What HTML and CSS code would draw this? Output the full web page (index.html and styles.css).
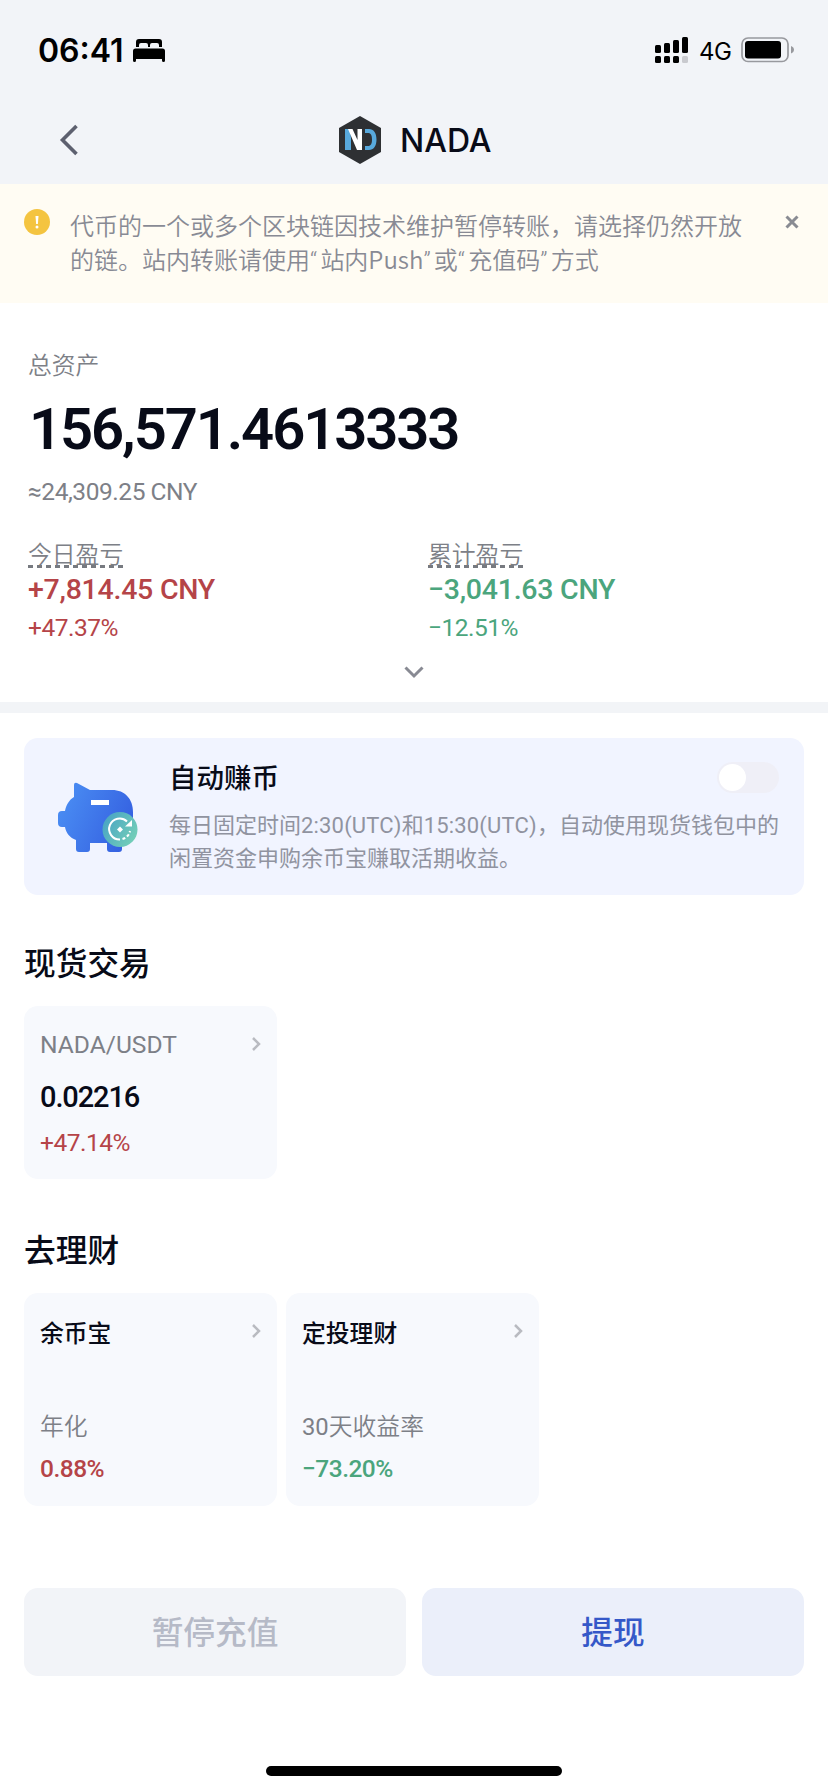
FILE: index.html
```html
<!DOCTYPE html>
<html lang="zh-CN">
<head>
    <meta charset="UTF-8">
    <meta name="viewport" content="width=device-width, initial-scale=1.0">
    <title>NADA</title>
    <link rel="stylesheet" href="styles.css">
</head>
<body>
    <header>
        <div class="status-bar">
            <span class="time">06:41</span>
            <svg class="bed" width="32" height="23" viewBox="0 0 32 23">
                <path d="M3 8V3a3 3 0 0 1 3-3h20a3 3 0 0 1 3 3v5h-3V6a2 2 0 0 0-2-2h-5a2 2 0 0 0-2 2v2h-2V6a2 2 0 0 0-2-2H8a2 2 0 0 0-2 2v2z"/>
                <path d="M0 12a2.500 2.500 0 0 1 2.500-2.500h27A2.500 2.500 0 0 1 32 12v9.500a1.500 1.500 0 0 1-3 0V20H3v1.500a1.500 1.500 0 0 1-3 0z"/>
            </svg>
            <svg class="signal" width="34" height="27" viewBox="0 0 34 27">
                <rect x="0" y="8" width="6" height="8" rx="1.500"/>
                <rect x="9" y="6" width="6" height="10" rx="1.500"/>
                <rect x="18" y="3" width="6" height="13" rx="1.500"/>
                <rect x="27" y="0" width="6" height="16" rx="1.500"/>
                <rect x="0" y="19" width="6" height="7" rx="1.500"/>
                <rect x="9" y="19" width="6" height="7" rx="1.500"/>
                <rect x="18" y="19" width="6" height="7" rx="1.500"/>
                <rect x="27" y="19" width="6" height="7" rx="1.500" fill="#c9cacf"/>
            </svg>
            <span class="network">4G</span>
            <svg class="battery" width="54" height="26" viewBox="0 0 54 26">
                <rect x="1" y="1" width="46" height="23.500" rx="6" fill="none" stroke="#98999e" stroke-width="1.700"/>
                <rect x="4" y="4" width="36" height="17.500" rx="3"/>
                <path d="M50 9c4 1.500 4 6 0 7.500z" fill="#98999e"/>
            </svg>
        </div>
        <nav>
            <svg class="back" width="19" height="32" viewBox="0 0 19 32">
                <path d="M17.500 2L3.500 16l14 14" fill="none" stroke="#5d606f" stroke-width="3.600"/>
            </svg>
            <div class="coin">
                <svg width="42" height="48" viewBox="0 0 42 48">
                    <path d="M21 0l21 12v24L21 48 0 36V12z" fill="#2e3033"/>
                    <path d="M6 13h5l1 9v12H6z" fill="#58a9dc"/>
                    <path d="M9 13h4.500l5 11V13h4.500v21h-5L12 20z" fill="#fff"/>
                    <path d="M26 13h4c4.500 0 7.500 4 7.500 10.500S34.500 34 30 34h-4v-4h3c3 0 4-2.500 4-6.500S32 17 29 17h-3z" fill="#58a9dc"/>
                </svg>
                <h1>NADA</h1>
            </div>
        </nav>
    </header>

    <div class="notice">
        <svg class="warn" width="26" height="26" viewBox="0 0 26 26">
            <circle cx="13" cy="13" r="13" fill="#f4c440"/>
            <path d="M11.500 7h3l-.6 8h-1.800z" fill="#fff"/>
            <circle cx="13" cy="18" r="1.500" fill="#fff"/>
        </svg>
        <p>代币的一个或多个区块链因技术维护暂停转账，请选择仍然开放<br>的链。站内转账请使用<span class="quote">“</span>站内Push<span class="quote">”</span>或<span class="quote">“</span>充值码<span class="quote">”</span>方式</p>
        <svg class="close" width="14" height="14" viewBox="0 0 14 14">
            <path d="M1.500 1.500l11 11M12.500 1.500l-11 11" stroke="#898b92" stroke-width="3"/>
        </svg>
    </div>

    <section class="assets">
        <div class="label">总资产</div>
        <div class="total">156,571.4613333</div>
        <div class="approx">≈24,309.25 CNY</div>
        <div class="pnl">
            <div class="pnl-item up">
                <span class="pnl-label">今日盈亏</span>
                <div class="pnl-value">+7,814.45 CNY</div>
                <div class="pnl-rate">+47.37%</div>
            </div>
            <div class="pnl-item down">
                <span class="pnl-label">累计盈亏</span>
                <div class="pnl-value">−3,041.63 CNY</div>
                <div class="pnl-rate">−12.51%</div>
            </div>
        </div>
        <svg class="expand" width="20" height="13" viewBox="0 0 20 13">
            <path d="M1.500 1.500L10 10l8.500-8.500" fill="none" stroke="#888a93" stroke-width="3"/>
        </svg>
    </section>

    <main>
        <div class="earn">
            <svg class="pig" width="82" height="72" viewBox="0 0 82 72">
                <defs>
                    <linearGradient id="pigFill" x1="0" y1="0.300" x2="1" y2="0.700">
                        <stop offset="0" stop-color="#4a8df3"/>
                        <stop offset="1" stop-color="#345fe0"/>
                    </linearGradient>
                    <linearGradient id="badgeFill" x1="0" y1="0" x2="1" y2="0.600">
                        <stop offset="0" stop-color="#449fc6"/>
                        <stop offset="1" stop-color="#72cdb8"/>
                    </linearGradient>
                </defs>
                <path d="M16 3q0-3 3-2l13 7h22c13 0 21 9 21 22v10c0 9-5 15-11 18v9q0 3-3 3H52q-3 0-3-3v-6H32v6q0 3-3 3H21q-3 0-3-3v-9C12 56 8 51 7 45H4q-4 0-4-4v-8q0-4 4-4h3c1-6 4-11 9-14z" fill="url(#pigFill)"/>
                <rect x="33" y="18" width="18" height="5" fill="#fff"/>
                <circle cx="62" cy="47.500" r="17.500" fill="url(#badgeFill)"/>
                <path d="M69 39.500A10.500 10.500 0 1 0 62 57.500" fill="none" stroke="#fff" stroke-width="2"/>
                <path d="M64.500 57a10.500 10.500 0 0 0 7.500-8" fill="none" stroke="#fff" stroke-width="2" stroke-dasharray="3 2"/>
                <path d="M74 38v6.500h-7z" fill="#fff"/>
                <path d="M62 44.500l3 3-3 3-3-3z" fill="#fff"/>
            </svg>
            <div class="earn-body">
                <div class="earn-head">
                    <h3>自动赚币</h3>
                    <div class="toggle"><i></i></div>
                </div>
                <p>每日固定时间<span class="utc">2:30(UTC)</span>和<span class="utc">15:30(UTC)</span>，自动使用现货钱包中的<br>闲置资金申购余币宝赚取活期收益。</p>
            </div>
        </div>

        <h2>现货交易</h2>
        <div class="cards">
            <div class="card spot up">
                <div class="card-head">
                    <span class="pair">NADA/USDT</span>
                    <svg width="9" height="14" viewBox="0 0 9 14"><path d="M1 1l6 6-6 6" fill="none" stroke="#b9bbc1" stroke-width="2.500"/></svg>
                </div>
                <div class="price">0.02216</div>
                <div class="rate">+47.14%</div>
            </div>
        </div>

        <h2 class="finance-title">去理财</h2>
        <div class="cards">
            <div class="card finance up">
                <div class="card-head">
                    <span>余币宝</span>
                    <svg width="9" height="14" viewBox="0 0 9 14"><path d="M1 1l6 6-6 6" fill="none" stroke="#b9bbc1" stroke-width="2.500"/></svg>
                </div>
                <div class="sub">年化</div>
                <div class="rate">0.88%</div>
            </div>
            <div class="card finance down">
                <div class="card-head">
                    <span>定投理财</span>
                    <svg width="9" height="14" viewBox="0 0 9 14"><path d="M1 1l6 6-6 6" fill="none" stroke="#b9bbc1" stroke-width="2.500"/></svg>
                </div>
                <div class="sub"><span class="num">30</span>天收益率</div>
                <div class="rate">−73.20%</div>
            </div>
        </div>
    </main>

    <footer>
        <button class="deposit" disabled>暂停充值</button>
        <button class="withdraw">提现</button>
    </footer>
    <div class="home-bar"></div>
</body>
</html>
```
FILE: styles.css
```css
*{
    margin: 0;
    padding: 0;
    box-sizing: border-box;
}
body {
    width: 828px;
    height: 1792px;
    background-color: #fff;
    color: #080b18;
    font-family: Roboto, "Noto Sans CJK SC", sans-serif;
    overflow: hidden;
}
svg {
    display: block;
    flex-shrink: 0;
}

/* header */
header {
    height: 184px;
    background-color: #f2f4f8;
}
.status-bar {
    height: 100px;
    padding: 0 33px 0 38px;
    display: flex;
    align-items: center;
    color: #000;
    font-family: Inter, sans-serif;
}
.time {
    font-size: 32px;
    font-weight: 600;
    width: 95px;
}
.signal {
    margin-left: auto;
}
.network {
    width: 32px;
    margin: 2px 10px 0 10px;
    font-size: 24px;
    letter-spacing: -0.5px;
}
nav {
    height: 80px;
    padding-left: 59px;
    display: flex;
    align-items: center;
}
.coin {
    display: flex;
    align-items: center;
    gap: 19px;
    margin-left: 261px;
}
h1 {
    font-family: Inter, sans-serif;
    font-size: 32px;
    font-weight: 500;
}

/* notice */
.notice {
    height: 119px;
    padding: 24px 29px 0 24px;
    display: flex;
    align-items: flex-start;
    background-color: #fffcf3;
    color: #888a94;
}
.warn {
    margin-top: 1px;
}
.notice p {
    margin-left: 20px;
    font-family: "Noto Sans CJK SC", sans-serif;
    font-size: 24px;
    font-weight: 350;
    line-height: 34px;
    white-space: nowrap;
}
.quote {
    font-family: Roboto, sans-serif;
    letter-spacing: 3.200px;
}
.close {
    margin: 7px 0 0 auto;
}

/* assets */
.assets {
    height: 399px;
    padding: 46px 28px 0;
    color: #7d8087;
}
.label {
    font-size: 23.800px;
    font-weight: 350;
    line-height: 34px;
}
.total {
    margin-top: 11px;
    padding-left: 1px;
    color: #080b18;
    font-size: 58px;
    font-weight: 600;
    line-height: 70px;
    letter-spacing: -2.100px;
}
.approx {
    margin-top: 12px;
    font-size: 24.500px;
    line-height: 32px;
    letter-spacing: -0.450px;
}
.pnl {
    margin-top: 30px;
    display: grid;
    grid-template-columns: 400px 1fr;
}
.pnl-label {
    display: inline-block;
    height: 30px;
    color: #7d8087;
    font-size: 23.800px;
    font-weight: 350;
    line-height: 34px;
    background: repeating-linear-gradient(90deg, #777a80 0 5px, transparent 5px 9px) bottom / 100% 3px no-repeat;
}
.pnl-value {
    font-size: 28.500px;
    font-weight: 500;
    line-height: 36px;
    margin-top: 4px;
    letter-spacing: -0.250px;
}
.pnl-rate {
    font-size: 24.500px;
    line-height: 32px;
    margin-top: 4px;
    letter-spacing: -0.500px;
}
.up .pnl-value, .up .pnl-rate, .up .rate {
    color: #b54448;
}
.down .pnl-value, .down .pnl-rate, .down .rate {
    color: #4ba57d;
}
.expand {
    margin: 22px auto 0;
}

/* main */
main {
    height: 886px;
    border-top: 11px solid #f2f4f7;
    padding: 25px 24px 0;
}
.earn {
    height: 157px;
    padding: 24px 25px 0 34px;
    display: flex;
    border-radius: 14px;
    background-color: #f1f4ff;
}
.pig {
    margin-top: 20px;
}
.earn-body {
    margin-left: 29px;
    flex: 1;
}
.earn-head {
    display: flex;
    justify-content: space-between;
    height: 31px;
}
h3 {
    font-size: 27.500px;
    font-weight: 500;
    line-height: 34px;
}
.toggle {
    width: 62px;
    height: 31px;
    padding: 2px;
    border-radius: 16px;
    background-color: #efeff7;
}
.toggle i {
    display: block;
    width: 27px;
    height: 27px;
    border-radius: 50%;
    background-color: #fff;
}
.earn p {
    margin-top: 16px;
    color: #9093a0;
    font-size: 22px;
    line-height: 33px;
    white-space: nowrap;
}
.utc {
    letter-spacing: 0.180px;
}
h2 {
    margin-top: 50px;
    font-size: 31.700px;
    font-weight: 500;
    line-height: 40px;
}
.finance-title {
    margin-top: 53px;
}
.cards {
    display: flex;
    gap: 9px;
    margin-top: 21px;
}
.card {
    width: 253px;
    padding: 22px 16px 0 16px;
    border-radius: 14px;
    background-color: #f7f9fd;
}
.spot {
    height: 173px;
}
.finance {
    height: 213px;
}
.card-head {
    display: flex;
    justify-content: space-between;
    align-items: center;
    height: 32px;
    font-size: 23.800px;
    font-weight: 500;
}
.pair {
    color: #7d8087;
    font-size: 24.600px;
    font-weight: 400;
}
.price {
    margin-top: 19px;
    font-size: 29px;
    font-weight: 500;
    line-height: 36px;
    letter-spacing: -1.100px;
}
.rate {
    font-size: 24.500px;
    line-height: 32px;
    letter-spacing: -0.500px;
}
.spot .rate {
    margin-top: 12px;
}
.sub {
    margin-top: 64px;
    color: #7d8087;
    font-size: 23.800px;
    font-weight: 350;
    line-height: 32px;
}
.num {
    font-weight: 400;
}
.finance .rate {
    margin-top: 10px;
    font-weight: 500;
}

/* footer */
footer {
    display: grid;
    grid-template-columns: 1fr 1fr;
    gap: 16px;
    padding: 0 24px;
}
button {
    height: 88px;
    padding-bottom: 4px;
    border: none;
    border-radius: 14px;
    font-family: "Noto Sans CJK SC", sans-serif;
    font-size: 31.700px;
    font-weight: 500;
}
.deposit {
    background-color: #f2f4f8;
    color: #b6bac7;
}
.withdraw {
    background-color: #ebeffa;
    color: #3558c8;
}
.home-bar {
    width: 296px;
    height: 10px;
    margin: 90px auto 0;
    border-radius: 5px;
    background-color: #000;
}
```
